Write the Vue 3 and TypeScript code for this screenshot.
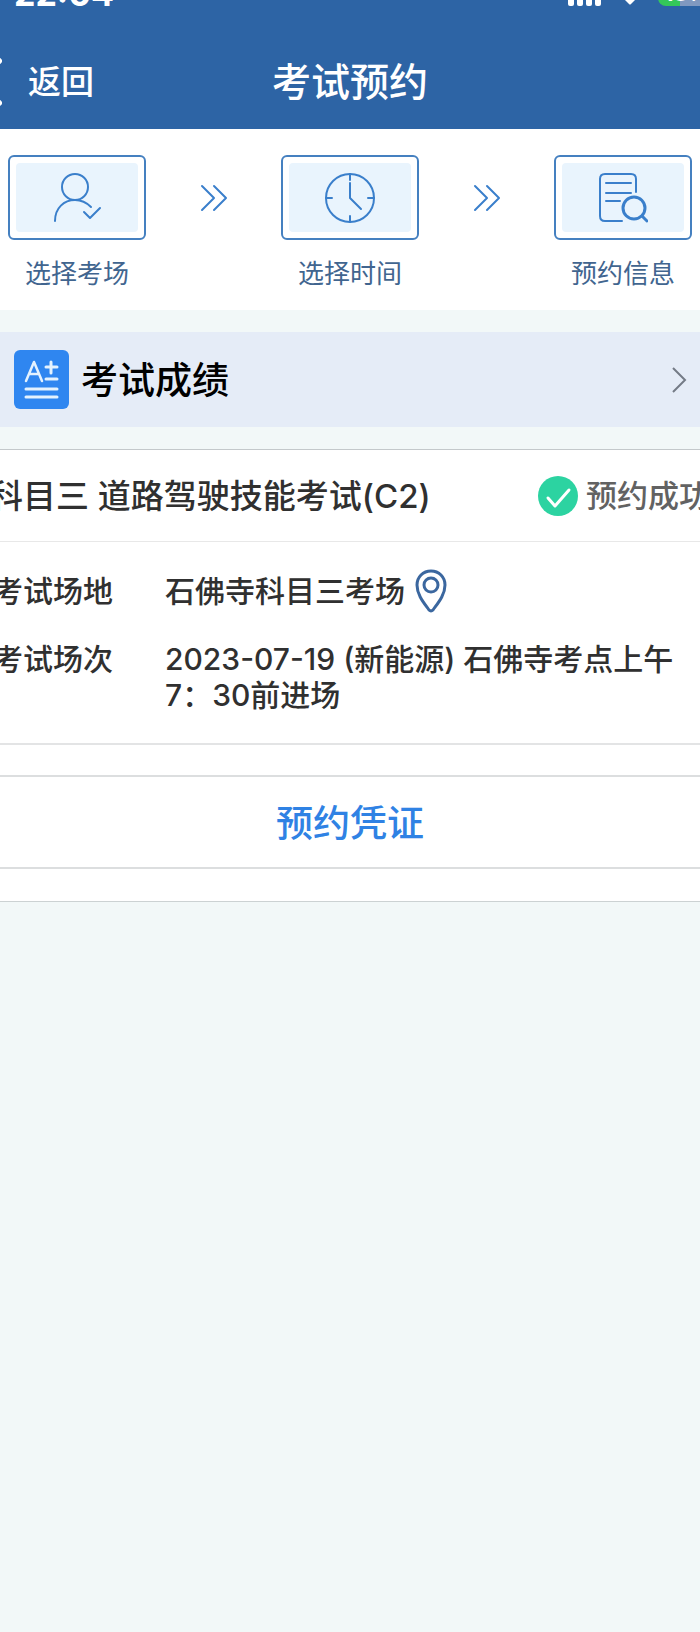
<script setup lang="ts">
type IconName = 'person' | 'clock' | 'search'

interface Step {
  label: string
  icon: IconName
}

const steps: Step[] = [
  { label: '选择考场', icon: 'person' },
  { label: '选择时间', icon: 'clock' },
  { label: '预约信息', icon: 'search' },
]

const signalBars: number[] = [0, 1, 2, 3]
</script>

<template>
  <div class="page">
    <header class="header">
      <div class="status">
        <span class="time">22:04</span>
        <span class="indicators">
          <span class="signal"><i v-for="bar in signalBars" :key="bar"></i></span>
          <svg class="wifi" width="26" height="20" viewBox="0 0 26 20" aria-hidden="true">
            <path d="M1 7a17 17 0 0 1 24 0l-2.500 2.500a13.500 13.500 0 0 0-19 0zM7 13a9 9 0 0 1 12 0l-5 5q-1 1-2 0z" fill="#fff" />
          </svg>
          <span class="battery">18%</span>
        </span>
      </div>
      <nav class="bar">
        <button class="back" type="button">
          <svg class="back-arrow" width="28" height="50" viewBox="0 0 28 50" aria-hidden="true">
            <path d="M25 4 4 25l21 21" fill="none" stroke="#fff" stroke-width="6" stroke-linecap="round" stroke-linejoin="round" />
          </svg>
          <span>返回</span>
        </button>
        <h1>考试预约</h1>
      </nav>
    </header>

    <section class="steps">
      <template v-for="(step, index) in steps" :key="step.label">
        <svg v-if="index > 0" class="next" width="28" height="28" viewBox="0 0 28 28" aria-hidden="true">
          <path d="M2 2l12 12L2 26M14 2l12 12-12 12" />
        </svg>
        <button class="step" type="button">
          <span class="frame">
            <span class="tile">
              <svg v-if="step.icon === 'person'" width="50" height="50" viewBox="0 0 50 50" aria-hidden="true">
                <circle cx="23" cy="14" r="13" />
                <path d="M3 48C3 35 12 27 23 27q9 0 16 7M32 39l6 6 10-10" />
              </svg>
              <svg v-else-if="step.icon === 'clock'" width="50" height="50" viewBox="0 0 50 50" aria-hidden="true">
                <circle cx="25" cy="25" r="24" />
                <path d="M25 1v6M25 43v6M1 25h6M43 25h6M25 10v15l11 11" />
              </svg>
              <svg v-else width="50" height="50" viewBox="0 0 50 50" aria-hidden="true">
                <path d="M24 48H7q-5 0-5-5V6q0-5 5-5h26q5 0 5 5v13M8 10h25M8 20h25M8 28h14" />
                <circle class="lens" cx="36" cy="35" r="11" />
                <path class="lens" d="M44 43l5 5" />
              </svg>
            </span>
          </span>
          <span class="step-label">{{ step.label }}</span>
        </button>
      </template>
    </section>

    <a class="score" href="#score">
      <svg width="56" height="60" viewBox="0 0 56 60" aria-hidden="true">
        <rect width="55" height="59" rx="6" fill="#2f86f0" />
        <g fill="none" stroke="#e4f2fe" stroke-linecap="round" stroke-linejoin="round">
          <path d="M12 31l8-19 8 19M15 24h10" stroke-width="2.500" />
          <path d="M32 17h11M37 12v11M32 29h11M12 39h31M12 47h31" stroke-width="3" />
        </g>
      </svg>
      <span class="score-text">考试成绩</span>
      <svg class="score-arrow" width="16" height="28" viewBox="0 0 16 28" aria-hidden="true">
        <path d="M2 2l12 12L2 26" fill="none" stroke="#747b86" stroke-width="2" />
      </svg>
    </a>

    <main class="card">
      <div class="card-head">
        <h2>科目三 道路驾驶技能考试(C2)</h2>
        <p class="result">
          <svg width="40" height="40" viewBox="0 0 40 40" aria-hidden="true">
            <circle cx="20" cy="20" r="20" fill="#2cd3a1" />
            <path d="M10 22l7 8 14-16" fill="none" stroke="#fff" stroke-width="3" stroke-linecap="round" stroke-linejoin="round" />
          </svg>
          <span>预约成功</span>
        </p>
      </div>
      <dl class="details">
        <dt>考试场地</dt>
        <dd class="place">
          <span>石佛寺科目三考场</span>
          <svg width="32" height="44" viewBox="0 0 32 44" aria-hidden="true">
            <path d="M16 2C8 2 2 8 2 16c0 10 7 18 12 25q2 2 4 0c5-7 12-15 12-25C30 8 24 2 16 2z" />
            <circle cx="16" cy="16" r="7" />
          </svg>
        </dd>
        <dt>考试场次</dt>
        <dd>2023-07-19 (新能源) 石佛寺考点上午 7：30前进场</dd>
      </dl>
      <button class="voucher" type="button">预约凭证</button>
    </main>
  </div>
</template>

<style>
body {
  background: #f2f8f8;
}
</style>

<style scoped>
* {
  box-sizing: border-box;
}

.page {
  overflow: hidden;
  background: #f2f8f8;
  color: #303030;
  font-family: Inter, "Noto Sans CJK SC", sans-serif;
  font-weight: 500;
}

h1,
h2,
p,
dl,
dd {
  margin: 0;
  font-weight: 500;
}

button {
  margin: 0;
  padding: 0;
  border: 0;
  background: none;
  color: inherit;
  font: inherit;
}

.header {
  overflow: hidden;
  background: #2d64a5;
  color: #fff;
}

.status {
  display: flex;
  justify-content: space-between;
  align-items: flex-end;
  height: 36px;
  margin-top: -30px;
  padding-left: 14px;
}

.time {
  font-size: 34px;
  font-weight: 700;
  line-height: 24px;
}

.indicators {
  display: flex;
  align-items: flex-end;
  margin-right: -16px;
}

.signal {
  display: flex;
  gap: 3px;
  margin-right: 16px;
}

.signal i {
  width: 6px;
  height: 20px;
  border-radius: 2px;
  background: #fff;
}

.wifi {
  margin-right: 15px;
}

.battery {
  width: 58px;
  height: 28px;
  border-radius: 8px;
  background: linear-gradient(90deg, #34c759 22px, #8099c0 22px);
  font-size: 22px;
  font-weight: 700;
  line-height: 30px;
  text-align: center;
}

.bar {
  display: grid;
  grid-template-columns: 1fr auto 1fr;
  align-items: center;
  height: 123px;
  padding-top: 28px;
}

.back {
  display: flex;
  align-items: center;
  gap: 26px;
  margin-left: -26px;
  font-size: 33px;
  line-height: 40px;
}

h1 {
  font-size: 39px;
  line-height: 48px;
}

.steps {
  display: flex;
  justify-content: space-between;
  padding: 26px 8px 19px;
  background: #fff;
}

.steps svg {
  fill: none;
  stroke: #3a7fcb;
  stroke-width: 2;
  stroke-linecap: round;
  stroke-linejoin: round;
}

.steps .lens {
  stroke-width: 3;
}

.next {
  margin-top: 29px;
}

.step {
  display: flex;
  flex-direction: column;
  align-items: center;
  gap: 17px;
}

.frame {
  display: block;
  width: 138px;
  height: 85px;
  padding: 6px;
  border: 2px solid #4580c0;
  border-radius: 6px;
}

.tile {
  display: flex;
  align-items: center;
  justify-content: center;
  height: 100%;
  border-radius: 4px;
  background: #e9f4fd;
}

.step-label {
  color: #41658f;
  font-size: 26px;
  font-weight: 400;
  line-height: 34px;
}

.score {
  display: flex;
  align-items: center;
  height: 95px;
  margin: 22px 0;
  padding: 0 13px 0 14px;
  background: #e5ecf7;
  color: #000;
  text-decoration: none;
}

.score-text {
  flex: 1;
  padding-top: 2px;
  margin-left: 11px;
  font-size: 37px;
  line-height: 48px;
}

.card {
  padding-bottom: 32px;
  border-top: 1px solid #c4c9cb;
  border-bottom: 1px solid #ccd2d3;
  background: #fff;
}

.card-head {
  display: flex;
  align-items: center;
  justify-content: space-between;
  height: 92px;
  margin: 0 -10px;
  border-bottom: 1px solid #e8e8e8;
  white-space: nowrap;
}

h2 {
  font-size: 33px;
  line-height: 40px;
}

.result {
  display: flex;
  align-items: center;
  gap: 8px;
  color: #626262;
  font-size: 31px;
  line-height: 40px;
}

.details {
  display: grid;
  grid-template-columns: 172px 1fr;
  align-items: baseline;
  row-gap: 28px;
  padding: 27px 16px 30px 0;
  margin-left: -7px;
  border-bottom: 2px solid #e3e4e5;
  font-size: 30px;
  line-height: 36px;
}

.place {
  display: flex;
  align-items: center;
  gap: 10px;
}

.place svg {
  fill: none;
  stroke: #3b679f;
  stroke-width: 3;
}

.voucher {
  display: block;
  width: 100%;
  height: 94px;
  padding-top: 4px;
  margin-top: 30px;
  border-top: 2px solid #dcdedf;
  border-bottom: 2px solid #dcdedf;
  color: #2f82e4;
  font-size: 37px;
  line-height: 48px;
}
</style>
